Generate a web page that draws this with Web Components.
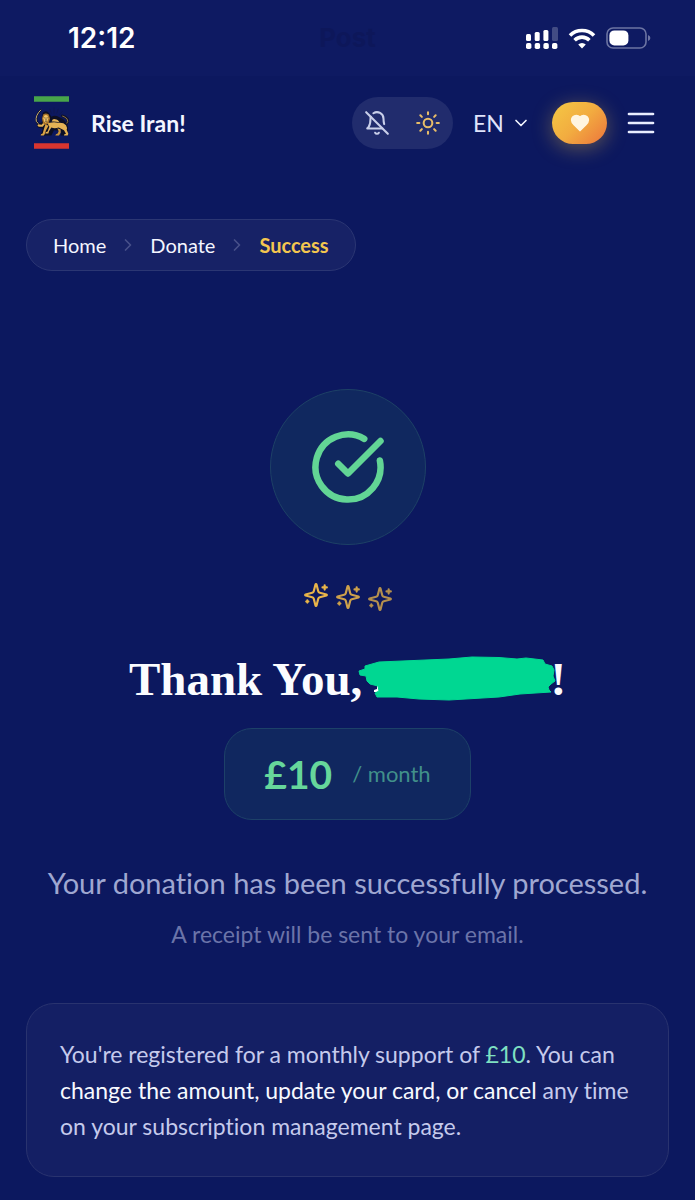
<!DOCTYPE html>
<html lang="en">
<head>
<meta charset="utf-8">
<meta name="viewport" content="width=device-width, initial-scale=1">
<title>Rise Iran! – Donation success</title>
<style>
html { background: #0c185f; }
body { margin: 0; font-family: Lato, "Open Sans", sans-serif; font-variant-ligatures: none; color: #f4f6ff; }
</style>
</head>
<body>
<donation-page></donation-page>
<script>
const define = (name, html) => {
  const template = document.createElement('template');
  template.innerHTML = html;
  customElements.define(name, class extends HTMLElement {
    constructor() {
      super();
      this.attachShadow({ mode: 'open' }).append(template.content.cloneNode(true));
    }
  });
};

/* line icons on a 24-unit grid, sized by --size */
const ICONS = {
  'bell-off': '<path d="M8.7 3A6 6 0 0 1 18 8a21.3 21.3 0 0 0 .6 5"/><path d="M17 17H3s3-2 3-9a4.67 4.67 0 0 1 .3-1.7"/><path d="M10.3 21a1.94 1.94 0 0 0 3.4 0"/><path d="m2 2 20 20"/>',
  sun: '<circle cx="12" cy="12" r="4"/><path d="M12 2v2M12 20v2M4.93 4.93l1.41 1.41M17.66 17.66l1.41 1.41M2 12h2M20 12h2M6.34 17.66l-1.41 1.41M19.07 4.93l-1.41 1.41"/>',
  'chevron-down': '<path d="m6 9 6 6 6-6"/>',
  'chevron-right': '<path d="m9 18 6-6-6-6"/>',
  heart: '<path fill="currentColor" d="M19 14c1.49-1.46 3-3.21 3-5.5A5.5 5.5 0 0 0 16.5 3c-1.76 0-3 .5-4.5 2-1.5-1.5-2.74-2-4.5-2A5.5 5.5 0 0 0 2 8.5c0 2.3 1.5 4.05 3 5.5l7 7Z"/>',
  menu: '<path d="M4 6h16M4 12h16M4 18h16"/>',
  check: '<path d="M21.801 10A10 10 0 1 1 17 3.335"/><path d="m9 11 3 3L22 4"/>',
  sparkles: '<path d="M9.937 15.5A2 2 0 0 0 8.5 14.063l-6.135-1.582a.5.5 0 0 1 0-.962L8.5 9.936A2 2 0 0 0 9.937 8.5l1.582-6.135a.5.5 0 0 1 .963 0L14.063 8.5A2 2 0 0 0 15.5 9.937l6.135 1.581a.5.5 0 0 1 0 .964L15.5 14.063a2 2 0 0 0-1.437 1.437l-1.582 6.135a.5.5 0 0 1-.963 0z"/><path d="M20 3v4M22 5h-4M4 17v2M5 18H3"/>'
};
customElements.define('line-icon', class extends HTMLElement {
  constructor() {
    super();
    this.attachShadow({ mode: 'open' });
  }
  connectedCallback() {
    this.shadowRoot.innerHTML = `<style>
      :host { display: block; flex: none; width: var(--size, 26px); height: var(--size, 26px); }
      svg { display: block; width: 100%; height: 100%; fill: none; stroke: currentColor; stroke-width: var(--stroke, 2); stroke-linecap: round; stroke-linejoin: round; }
    </style><svg viewBox="0 0 24 24" aria-hidden="true">${ICONS[this.getAttribute('name')]}</svg>`;
  }
});

define('status-bar', `<style>
  :host { display: grid; grid-template-columns: 1fr auto 1fr; align-items: center; height: 76px; padding: 0 44px; background: #0e1a62; box-sizing: border-box; }
  time { padding-left: 24px; font: 600 28px/32px Inter, sans-serif; color: #fff; }
  .ghost { font: 700 26px/32px Inter, sans-serif; color: #0d175a; }
  .signals { display: flex; justify-content: flex-end; align-items: center; gap: 10px; }
  svg { display: block; }
</style>
<time>12:12</time>
<span class="ghost" aria-hidden="true">Post</span>
<div class="signals">
  <svg width="32" height="24" viewBox="0 0 32 24" fill="#fff" role="img" aria-label="Signal">
    <rect y="8" width="5" height="7" rx="1.5"/><rect x="8.7" y="6" width="5" height="9" rx="1.5"/><rect x="17.4" y="4" width="5" height="11" rx="1.5"/><rect x="26" y="1" width="6" height="14" rx="1.5" opacity=".22"/>
    <rect y="17" width="5.4" height="6" rx="1.8"/><rect x="8.7" y="17" width="5.4" height="6" rx="1.8"/><rect x="17.4" y="17" width="5.4" height="6" rx="1.8"/><rect x="26" y="17" width="5.4" height="6" rx="1.8"/>
  </svg>
  <svg width="28" height="22" viewBox="0 0 28 22" fill="none" stroke="#fff" stroke-width="3.6" role="img" aria-label="Wi-Fi">
    <path d="M2 8.4a17 17 0 0 1 24 0M6.6 13.2a10.5 10.5 0 0 1 14.8 0"/><path d="M14 21.4l-3.8-4a5.5 5.5 0 0 1 7.6 0z" fill="#fff" stroke="none"/>
  </svg>
  <svg width="45" height="22" viewBox="0 0 45 22" role="img" aria-label="Battery">
    <rect x="1" y="1" width="39" height="20" rx="6" fill="none" stroke="#6c74a3" stroke-width="1.6"/><rect x="3.4" y="3.4" width="19" height="15" rx="5" fill="#fff"/><path d="M42 8q2.400 1 2.400 3t-2.400 3z" fill="#6c74a3"/>
  </svg>
</div>`);

define('lion-emblem', `<style>:host { display: block; flex: none; } svg { display: block; }</style>
<svg width="35" height="53" viewBox="0 0 105 158" role="img" aria-label="Lion emblem">
  <path fill="#48a54a" d="M0 0h105v17H0z"/><path fill="#d8352f" d="M0 141h105v17H0z"/>
  <g stroke="#0f1648" stroke-width="2"><path d="M60 52V35M52 52l-5-14M68 52l5-14M76 56l10-11"/></g>
  <g fill="none" stroke-linecap="round"><path d="M20 42Q4 58 8 76l12 16" stroke="#10122b" stroke-width="6"/><path d="M20 42Q3 58 7 76l12 12" stroke="#c9ae72" stroke-width="3"/>
  <path d="M96 84q9-8 4-16-6-7-15-9" stroke="#10122b" stroke-width="8"/><path d="M97 84q8-9 2-16-6-6-13-8" stroke="#ad8b4a" stroke-width="2.400"/></g>
  <path fill="#0d0f24" d="M26 50q10-10 20 2l6 10q12-8 26 2 10 2 18 14l6 14-1 26H80l2-14-22-2-8 16H20l6-20-14-4-4-10 16-6z"/>
  <g fill="#e5b255">
    <path d="M48 80q12-3 24 0 16-2 24 7 5 8 2 14l5 12-2 5H90l1-4 5-1-6-11-16-8q-12 5-22 0l-7 11-2 7H34l1-4 6-2 5-14-6-12z"/>
    <path d="M70 96l10 4 0 10-5 8H64l2-4 5-2 3-7z" fill="#c8933c"/>
    <path d="M44 88l-8 14-4 12-3 4H20l1-4 5-2 4-14 4-12z" fill="#d9a346"/>
    <path d="M34 82l-8 10-12 0-4-5 3-3 10 2 5-6z"/>
    <path d="M53 76q3-9 10-7 9 0 13 9-12-3-23-2z"/>
  </g>
  <path d="M28 54q8-5 16 1l4 12-4 14-9 6-8-6-3-14z" fill="#a87329"/>
  <path d="M31 58q5-3 10 1l2 8-3 9-5 4-5-5-2-9z" fill="#f3c566"/>
  <path d="M31 65h3M38 65h3M36 67v5M33 75h6" stroke="#15152b" stroke-width="2"/>
</svg>`);

define('site-header', `<style>
  :host { display: flex; align-items: center; padding: 20px 36px 0 34px; }
  .brand { display: flex; align-items: center; gap: 22px; margin-right: auto; color: inherit; text-decoration: none; font-size: 23px; line-height: 28px; font-weight: 700; }
  button { display: flex; align-items: center; justify-content: center; margin: 0; padding: 0; border: 0; background: none; color: inherit; cursor: pointer; }
  .tools { display: flex; width: 101px; height: 52px; border-radius: 26px; background: #212c6d; margin-right: 20px; --stroke: 1.9; }
  .tools button { flex: 1; color: #c9cfea; }
  .tools button + button { color: #e8bd68; }
  .lang { display: grid; align-items: center; width: 58px; margin-right: 21px; }
  .lang > * { grid-area: 1 / 1; }
  select { appearance: none; width: 100%; border: 0; margin: 0; padding: 0; background: transparent; color: #dfe4fb; font: 400 23px/32px Lato, sans-serif; }
  .lang line-icon { --size: 20px; justify-self: end; pointer-events: none; }
  .give { width: 55px; height: 42px; border-radius: 21px; background: linear-gradient(135deg, #f5c944, #f2ac40 50%, #ec743c); box-shadow: 0 4px 20px rgba(245, 197, 66, .36); color: #fff5e0; margin-right: 16px; --size: 20px; }
  .menu { --size: 36px; --stroke: 1.8; color: #e9edff; }
</style>
<a class="brand" href="#home"><lion-emblem></lion-emblem><span>Rise Iran!</span></a>
<div class="tools">
  <button type="button" aria-label="Notifications off"><line-icon name="bell-off"></line-icon></button>
  <button type="button" aria-label="Light theme"><line-icon name="sun"></line-icon></button>
</div>
<div class="lang"><select aria-label="Language"><option>EN</option></select><line-icon name="chevron-down"></line-icon></div>
<button class="give" type="button" aria-label="Donate"><line-icon name="heart"></line-icon></button>
<button class="menu" type="button" aria-label="Menu"><line-icon name="menu"></line-icon></button>`);

define('bread-crumbs', `<style>
  :host { display: block; }
  nav { display: flex; width: fit-content; align-items: center; gap: 12px; height: 52px; box-sizing: border-box; padding: 0 26px; border: 1px solid #2b3673; border-radius: 26px; background: #172266; font-size: 20px; line-height: 24px; --size: 20px; }
  a { color: inherit; text-decoration: none; }
  line-icon { color: #48518a; }
  span { color: #f3c64f; font-weight: 700; }
</style>
<nav aria-label="Breadcrumb"><a href="#home">Home</a><line-icon name="chevron-right"></line-icon><a href="#donate">Donate</a><line-icon name="chevron-right"></line-icon><span aria-current="page">Success</span></nav>`);

define('success-badge', `<style>
  :host { display: flex; flex-direction: column; align-items: center; }
  .disc { display: grid; place-items: center; box-sizing: border-box; width: 156px; height: 156px; border: 1px solid #1d4166; border-radius: 50%; background: #10285f; color: #62d595; --size: 78px; }
  .sparks { display: flex; gap: 6px; margin-top: 37px; color: #e9b549; }
  .sparks line-icon { margin-top: calc(var(--step) * 2px); opacity: calc(1 - var(--step) * .12); }
</style>
<div class="disc"><line-icon name="check"></line-icon></div>
<div class="sparks"><line-icon name="sparkles" style="--step:0"></line-icon><line-icon name="sparkles" style="--step:1"></line-icon><line-icon name="sparkles" style="--step:2"></line-icon></div>`);

define('thank-you', `<style>
  :host { display: block; }
  h1 { display: flex; justify-content: center; align-items: center; margin: 0; font: 700 47px/56px "Liberation Serif", serif; color: #fbfcff; }
  svg { display: block; width: 188px; height: 44px; overflow: visible; }
</style>
<h1><span>Thank You,</span><svg viewBox="363 658 188 44" role="img" aria-label="Hidden name">
  <path fill="#fff" d="M378 686h2v7h-5v-2l3-1z"/>
  <path fill="#00d792" d="M380 663L450 660 473 658 500 658.500 518 660 527 659 544 661 546 665 553 667 555 671 554 677 556 682 552 685 549 688 550 691 552 693 521 695 500 698 450 701 420 700 398 698 378 698 376 694 380 692 379 687 371 685 368 682 367 677 361 676 360 672 366 670 366 667Z" stroke="#00d792" stroke-width="1" stroke-linejoin="round"/>
</svg><span>!</span></h1>`);

define('amount-pill', `<style>
  :host { display: flex; justify-content: center; }
  p { display: flex; align-items: center; gap: 20px; box-sizing: border-box; height: 92px; margin: 0; padding: 0 39px; border: 1px solid #1d4168; border-radius: 28px; background: #10275f; color: #66d69b; font-size: 39px; line-height: 48px; font-weight: 700; }
  small { font-size: 22px; line-height: 28px; font-weight: 400; color: #41908a; }
</style>
<p><slot></slot><small><slot name="period"></slot></small></p>`);

define('info-card', `<style>
  :host { display: block; padding: 32px 33px; border: 1px solid #29336f; border-radius: 28px; background: #141f64; color: #c5caec; font-size: 23px; line-height: 36px; }
  p { margin: 0; }
</style><p><slot></slot></p>`);

define('donation-page', `<style>
  :host { display: block; background: #0c185f; }
  main { display: flex; flex-direction: column; padding: 70px 26px 22px; }
  success-badge { margin-top: 118px; }
  thank-you { margin-top: 39px; }
  amount-pill { margin-top: 21px; }
  .lead, .note { margin: 0; text-align: center; }
  .lead { margin-top: 43px; font-size: 29px; line-height: 40px; color: #9fa7d1; }
  .note { margin-top: 15px; font-size: 23px; line-height: 32px; color: #6b74a9; }
  info-card { margin-top: 53px; }
  .sum { color: #7fe0c2; }
  .strong { color: #f7f9ff; }
</style>
<status-bar></status-bar>
<site-header></site-header>
<main>
  <bread-crumbs></bread-crumbs>
  <success-badge></success-badge>
  <thank-you></thank-you>
  <amount-pill>£10<span slot="period">/ month</span></amount-pill>
  <p class="lead">Your donation has been successfully processed.</p>
  <p class="note">A receipt will be sent to your email.</p>
  <info-card>You're registered for a monthly support of <span class="sum">£10</span><span>. You can</span> <span class="strong">change the amount, update your card, or cancel</span> <span>any time</span> <span>on your subscription management page.</span></info-card>
</main>`);
</script>
</body>
</html>
